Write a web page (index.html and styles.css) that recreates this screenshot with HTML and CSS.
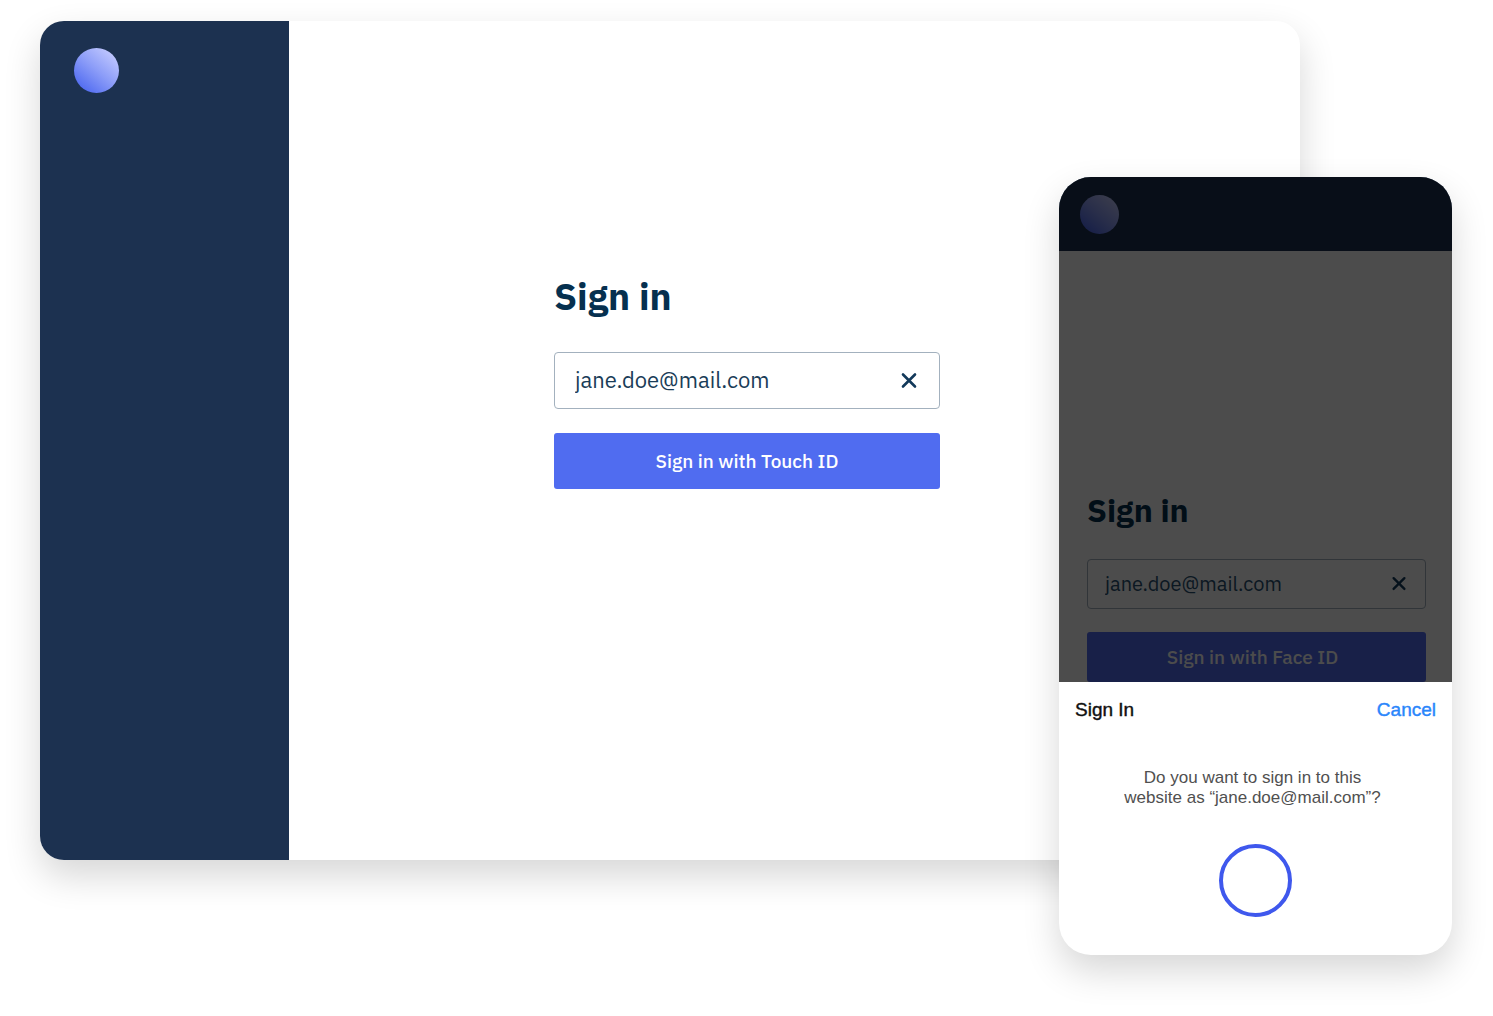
FILE: index.html
```html
<!DOCTYPE html>
<html lang="en">
<head>
<meta charset="utf-8">
<meta name="viewport" content="width=device-width, initial-scale=1">
<title>Sign in</title>
<link rel="stylesheet" href="styles.css">
</head>
<body>
<main class="stage">
  <section class="desktop">
    <aside class="sidebar"><span class="logo"></span></aside>
    <div class="content">
      <form class="form">
        <h1 class="title">Sign in</h1>
        <div class="field">
          <input class="input" type="text" value="jane.doe@mail.com" aria-label="Email">
          <button class="clear" type="button" aria-label="Clear">
            <svg class="cross" viewBox="0 0 20 20"><path d="M4 3.5l12 12M16 3.5l-12 12"/></svg>
          </button>
        </div>
        <button class="submit" type="button">Sign in with Touch ID</button>
      </form>
    </div>
  </section>
  <section class="phone">
    <div class="screen">
      <header class="topbar"><span class="logo"></span></header>
      <form class="form form-small">
        <h2 class="title">Sign in</h2>
        <div class="field">
          <input class="input" type="text" value="jane.doe@mail.com" aria-label="Email">
          <button class="clear" type="button" aria-label="Clear">
            <svg class="cross" viewBox="0 0 20 20"><path d="M4 3.5l12 12M16 3.5l-12 12"/></svg>
          </button>
        </div>
        <button class="submit" type="button">Sign in with Face ID</button>
      </form>
    </div>
    <div class="sheet" role="dialog" aria-labelledby="sheet-title">
      <div class="sheet-head">
        <h3 class="sheet-title" id="sheet-title">Sign In</h3>
        <button class="cancel" type="button">Cancel</button>
      </div>
      <p class="question">Do you want to sign in to this<br>website as “jane.doe@mail.com”?</p>
      <div class="ring"></div>
    </div>
  </section>
</main>
</body>
</html>
```

FILE: styles.css
```css
* {
  box-sizing: border-box;
}

body {
  margin: 0;
  background: #fff;
  color: #06304f;
  font-family: "IBM Plex Sans", "Open Sans", sans-serif;
}

h1, h2, h3, p {
  margin: 0;
}

button {
  border: 0;
  padding: 0;
  background: none;
  font: inherit;
  cursor: pointer;
}

/* The phone shares the middle column with the desktop window. */
.stage {
  display: grid;
  grid-template-columns: minmax(0, 1fr) 241px 152px;
  align-items: start;
  padding: 21px 41px 60px 40px;
}

.desktop {
  grid-area: 1 / 1 / 2 / 3;
  display: flex;
  min-height: 839px;
  border-radius: 24px;
  overflow: hidden;
  background: #fff;
  box-shadow: 0 16px 36px rgba(0, 0, 0, 0.16);
}

.sidebar {
  flex: 0 0 249px;
  padding: 27px 34px;
  background: #1c3150;
}

.logo {
  display: block;
  width: 45px;
  height: 45px;
  border-radius: 50%;
  background: linear-gradient(40deg, #4a66f0 8%, #8b9cf8 50%, #cbd0ff 96%);
}

.content {
  flex: 1;
  padding: 247px 24px 24px 265px;
}

.form {
  width: 386px;
  display: flex;
  flex-direction: column;
}

.title {
  margin-bottom: 28px;
  font-size: 37px;
  line-height: 56px;
  font-weight: 700;
}

.field {
  display: flex;
  align-items: center;
  height: 57px;
  margin-bottom: 24px;
  padding: 0 20px;
  border: 1px solid #a3b1be;
  border-radius: 4px;
}

.input {
  flex: 1;
  min-width: 0;
  padding: 0 0 2px;
  border: 0;
  outline: 0;
  background: none;
  color: #1a3d58;
  font: inherit;
  font-size: 22px;
}

.clear {
  display: flex;
}

.cross {
  width: 20px;
  height: 20px;
  fill: none;
  stroke: #12395a;
  stroke-width: 2.6;
  stroke-linecap: round;
}

.submit {
  height: 56px;
  border-radius: 3px;
  background: #506cf0;
  color: #fff;
  font-size: 19px;
  font-weight: 500;
}

.phone {
  grid-area: 1 / 2 / 2 / 4;
  margin-top: 156px;
  border-radius: 32px;
  overflow: hidden;
  background: #fff;
  box-shadow: 0 16px 36px rgba(0, 0, 0, 0.16);
}

.screen {
  position: relative;
  height: 505px;
  overflow: hidden;
}

/* Dims the page behind the sheet. */
.screen::after {
  content: "";
  position: absolute;
  inset: 0;
  background: rgba(0, 0, 0, 0.7);
}

.topbar {
  height: 74px;
  padding: 18px 21px;
  background: #1c3150;
}

.topbar .logo {
  width: 39px;
  height: 39px;
}

.form-small {
  width: auto;
  padding: 235px 26px 0 28px;
}

.form-small .title {
  margin-bottom: 25px;
  font-size: 32px;
  line-height: 48px;
}

.form-small .field {
  height: 50px;
  margin-bottom: 23px;
  padding: 0 17px;
}

.form-small .input {
  color: #2a5272;
  font-size: 20px;
}

.form-small .cross {
  width: 18px;
  height: 18px;
}

.form-small .submit {
  height: 50px;
  padding-right: 8px;
}

.sheet {
  display: flex;
  flex-direction: column;
  align-items: center;
  padding: 16px 16px 38px;
  font-family: "Liberation Sans", Arial, sans-serif;
}

.sheet-head {
  align-self: stretch;
  display: flex;
  justify-content: space-between;
  margin-bottom: 46px;
  font-size: 19px;
  line-height: 24px;
}

.sheet-title {
  color: #111;
  font-size: 19px;
  font-weight: 400;
  -webkit-text-stroke: 0.4px;
}

.cancel {
  color: #2a86fb;
  -webkit-text-stroke: 0.4px;
}

.question {
  margin-bottom: 36px;
  padding-right: 6px;
  color: #505050;
  font-size: 17px;
  line-height: 20px;
  text-align: center;
}

.ring {
  width: 73px;
  height: 73px;
  border: 4px solid #3f58ed;
  border-radius: 50%;
}
```
